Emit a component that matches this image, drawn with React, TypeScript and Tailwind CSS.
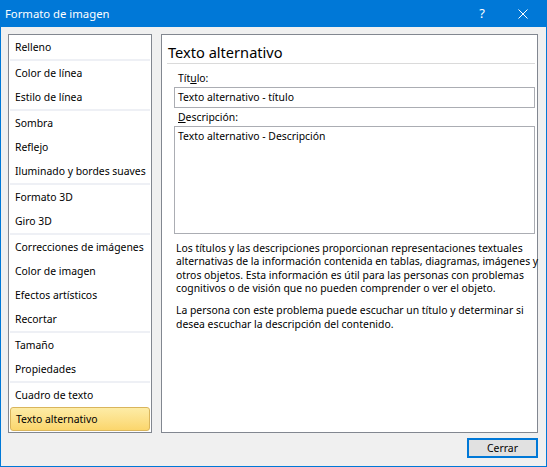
import React from 'react'

const groups: string[][] = [
  ['Relleno'],
  ['Color de línea', 'Estilo de línea'],
  ['Sombra', 'Reflejo', 'Iluminado y bordes suaves'],
  ['Formato 3D', 'Giro 3D'],
  ['Correcciones de imágenes', 'Color de imagen', 'Efectos artísticos', 'Recortar'],
  ['Tamaño', 'Propiedades'],
  ['Cuadro de texto', 'Texto alternativo'],
]

const selected = 'Texto alternativo'

function SideItem({ label }: { label: string }) {
  if (label === selected) {
    return (
      <div className="h-[24px] mx-px flex items-center pl-[5px] pt-px rounded-[3px] border border-[#d9b55c] bg-gradient-to-b from-[#fdeca6] to-[#fbd66c] whitespace-nowrap">
        {label}
      </div>
    )
  }
  return <div className="h-[24px] flex items-center pl-[6px] pt-px whitespace-nowrap">{label}</div>
}

export default function App() {
  return (
    <div className="w-[547px] h-[467px] flex flex-col border border-[#0078d7] bg-[#f0f0f0] text-[10.4px] text-black font-['Noto_Sans',sans-serif]">
      {/* title bar */}
      <div className="h-[26px] bg-[#0078d7] flex items-center text-white shrink-0">
        <div className="pl-[4px] text-[11.3px] flex-1">Formato de imagen</div>
        <div className="w-[20px] text-center text-[13px] mr-[26px]">?</div>
        <svg className="w-[10px] h-[10px] mr-[18px]" viewBox="0 0 10 10" fill="none" stroke="white" strokeWidth={1}>
          <path d="M0.5 0.5 L9.5 9.5 M9.5 0.5 L0.5 9.5" />
        </svg>
      </div>

      <div className="flex flex-col pl-[7px] pr-[8px] pt-[7px]">
        <div className="flex gap-[9px]">
          {/* left list */}
          <div className="w-[144px] h-[399px] border border-[#828790] bg-white flex flex-col">
            {groups.map((g, i) => (
              <div key={i}>
                {g.map((label) => (
                  <SideItem key={label} label={label} />
                ))}
                {i < groups.length - 1 && <div className="h-[2px] mx-px bg-[#eef0f5]"></div>}
              </div>
            ))}
          </div>

          {/* right content */}
          <div className="w-[377px] h-[399px] border border-[#828790] bg-white flex flex-col pl-[5px] pr-[2px]">
            <div className="h-[29px] pt-[6px] pl-px leading-[22px] text-[14.6px] border-b border-[#dadada]">
              Texto alternativo
            </div>
            <div className="flex flex-col pl-[7px]">
              <div className="mt-[7px] pl-[4px] leading-[15px]">
                Tít<span className="underline">u</span>lo:
              </div>
              <div className="mt-px h-[21px] border border-[#abadb3] px-[3px] leading-[19px]">
                Texto alternativo - título
              </div>
              <div className="mt-[2px] pl-[4px] leading-[15px]">
                <span className="underline">D</span>escripción:
              </div>
              <div className="mt-px h-[108px] border border-[#abadb3] px-[3px] pt-[2px] leading-[15px]">
                Texto alternativo - Descripción
              </div>
              <div className="mt-[8px] pl-[2px] leading-[13.33px] whitespace-nowrap">
                Los títulos y las descripciones proporcionan representaciones textuales
                <br />
                alternativas de la información contenida en tablas, diagramas, imágenes y
                <br />
                otros objetos. Esta información es útil para las personas con problemas
                <br />
                cognitivos o de visión que no pueden comprender o ver el objeto.
              </div>
              <div className="mt-[9px] pl-[2px] leading-[13.33px] whitespace-nowrap">
                La persona con este problema puede escuchar un título y determinar si
                <br />
                desea escuchar la descripción del contenido.
              </div>
            </div>
          </div>
        </div>

        {/* footer */}
        <div className="flex justify-end pt-[5px]">
          <button className="w-[71px] h-[20px] border-2 border-[#0078d7] bg-[#e1e1e1] flex items-center justify-center leading-none">
            Cerrar
          </button>
        </div>
      </div>
    </div>
  )
}
